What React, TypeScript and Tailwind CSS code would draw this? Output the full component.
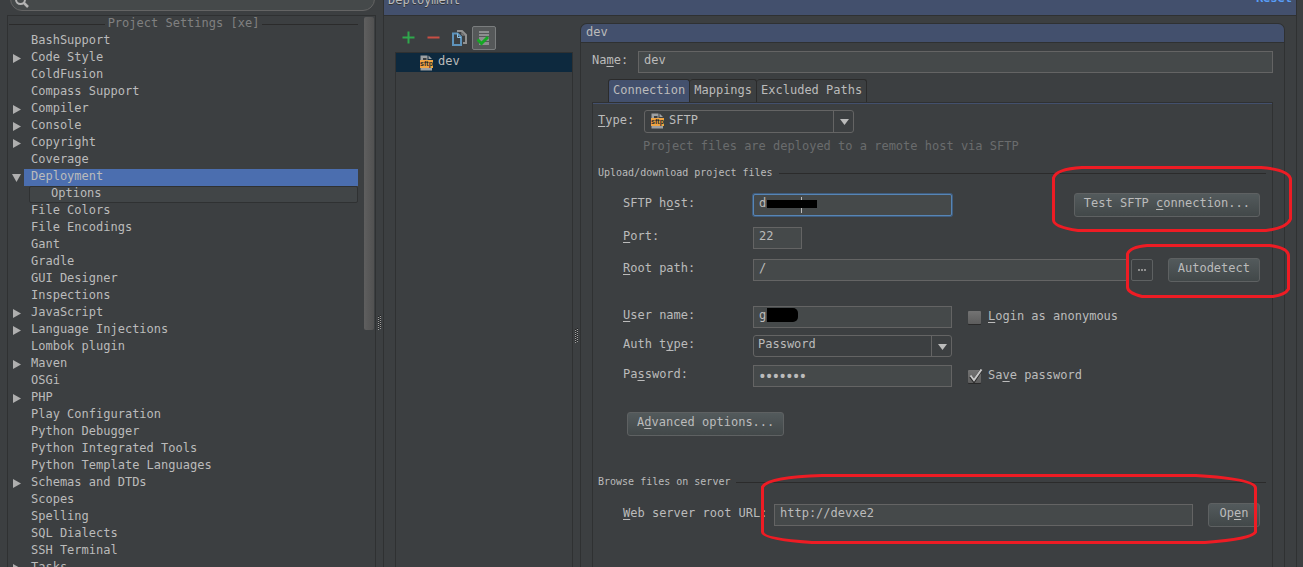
import React, { useState } from 'react';
import clsx from 'clsx';

interface TreeItem {
  label: string;
  arrow?: 'closed' | 'open';
  selected?: boolean;
  child?: boolean;
}

const treeItems: TreeItem[] = [
  { label: 'BashSupport' },
  { label: 'Code Style', arrow: 'closed' },
  { label: 'ColdFusion' },
  { label: 'Compass Support' },
  { label: 'Compiler', arrow: 'closed' },
  { label: 'Console', arrow: 'closed' },
  { label: 'Copyright', arrow: 'closed' },
  { label: 'Coverage' },
  { label: 'Deployment', arrow: 'open', selected: true },
  { label: 'Options', child: true },
  { label: 'File Colors' },
  { label: 'File Encodings' },
  { label: 'Gant' },
  { label: 'Gradle' },
  { label: 'GUI Designer' },
  { label: 'Inspections' },
  { label: 'JavaScript', arrow: 'closed' },
  { label: 'Language Injections', arrow: 'closed' },
  { label: 'Lombok plugin' },
  { label: 'Maven', arrow: 'closed' },
  { label: 'OSGi' },
  { label: 'PHP', arrow: 'closed' },
  { label: 'Play Configuration' },
  { label: 'Python Debugger' },
  { label: 'Python Integrated Tools' },
  { label: 'Python Template Languages' },
  { label: 'Schemas and DTDs', arrow: 'closed' },
  { label: 'Scopes' },
  { label: 'Spelling' },
  { label: 'SQL Dialects' },
  { label: 'SSH Terminal' },
  { label: 'Tasks', arrow: 'closed' },
];

const tabs = ['Connection', 'Mappings', 'Excluded Paths'];

const inputClass =
  'h-[22px] min-w-0 border border-[#646464] bg-[#45494a] px-[5px] pb-1 text-[#bbbbbb] outline-none';
const selectClass =
  'h-full w-full appearance-none rounded-[3px] border border-[#646464] bg-[#3c3f41] pb-1 text-[#bbbbbb] outline-none';
const buttonClass =
  'h-6 min-w-[52px] shrink-0 rounded-[3px] border border-[#5e6162] bg-linear-to-b from-[#535a5c] to-[#424849] px-[9px] pb-1 whitespace-nowrap text-[#bbbbbb]';

// "_" goes before the mnemonic letter
function Mnemonic({ text }: { text: string }) {
  const at = text.indexOf('_');
  if (at < 0) return <>{text}</>;
  return (
    <>
      {text.slice(0, at)}
      <span className="underline underline-offset-2">{text[at + 1]}</span>
      {text.slice(at + 2)}
    </>
  );
}

function TreeArrow({ open }: { open: boolean }) {
  return (
    <svg width="9" height="9" viewBox="0 0 9 9" className="shrink-0" fill="#afafaf">
      {open ? <path d="M0 1h9L4.5 9z" /> : <path d="M1 0v9l8-4.5z" />}
    </svg>
  );
}

function SftpIcon() {
  return (
    <svg width="14" height="16" viewBox="0 0 14 16" className="shrink-0">
      <path d="M0.500 0.500H7.500V5H12V15.500H0.500z" fill="#9da0a2" />
      <path d="M3 3h3.500v3H9.500v7H3z" fill="#3c3f41" />
      <path d="M8.500 0.500l3.500 3.500H8.500z" fill="#9da0a2" />
      <rect x="0" y="5" width="13" height="8" fill="#efa443" />
      <text x="6.500" y="11" fontSize="7" fontWeight="bold" textAnchor="middle" fontFamily="Liberation Sans, sans-serif" fill="#2a2a2a">sftp</text>
    </svg>
  );
}

function Splitter() {
  return (
    <div className="flex w-[7px] shrink-0 items-start justify-center">
      <svg width="4" height="15" viewBox="0 0 4 15" shapeRendering="crispEdges">
        {[0, 2, 4, 6, 8, 10, 12].map(y => (
          <g key={y}>
            <rect x="0" y={y + 2} width="1" height="1" fill="#a0a0a0" />
            <rect x="0" y={y + 1} width="1" height="1" fill="#222" />
            <rect x="2" y={y + 1} width="1" height="1" fill="#a0a0a0" />
            <rect x="2" y={y} width="1" height="1" fill="#222" />
          </g>
        ))}
      </svg>
    </div>
  );
}

function SectionTitle({ children, className }: { children: React.ReactNode; className: string }) {
  return (
    <div className={clsx('flex h-4 items-center gap-1.5 pr-[6px] text-[10px]', className)}>
      <h2>{children}</h2>
      <div className="h-px flex-1 bg-[#2b2b2b]" />
    </div>
  );
}

function SelectArrow() {
  return (
    <span className="pointer-events-none absolute inset-y-0 right-0 flex w-[21px] items-center justify-center border-l border-[#646464]">
      <svg width="9" height="7" viewBox="0 0 9 7" fill="#bbbbbb">
        <path d="M0 1h9L4.500 7z" />
      </svg>
    </span>
  );
}

function FieldLabel({ htmlFor, text }: { htmlFor: string; text: string }) {
  return (
    <label htmlFor={htmlFor} className="w-[130px] shrink-0 pb-1">
      <Mnemonic text={text} />
    </label>
  );
}

function Checkbox({ text, checked, onChange }: { text: string; checked: boolean; onChange: (v: boolean) => void }) {
  return (
    <label className="ml-4 flex items-center gap-[7px]">
      <span className="relative size-[13px]">
        <input
          type="checkbox"
          checked={checked}
          onChange={e => onChange(e.target.checked)}
          className="block size-[13px] appearance-none rounded-[1px] bg-linear-to-b from-[#737373] to-[#5d5d5d] shadow-[0_1px_0_#2a2a2a]"
        />
        {checked && (
          <svg width="15" height="14" viewBox="0 0 15 14" className="pointer-events-none absolute -top-px left-0" fill="none">
            <path d="M2.500 7.500L6 12L13 1.500" stroke="#2a2a2a" strokeWidth="3" />
            <path d="M2.500 6.500L6 11L13.500 0.500" stroke="#c8c8c8" strokeWidth="2" />
          </svg>
        )}
      </span>
      <span className="pb-0.5">
        <Mnemonic text={text} />
      </span>
    </label>
  );
}

function SettingsTree() {
  return (
    <nav className="flex min-h-0 flex-1 overflow-hidden border border-b-0 border-[#2f3132]">
      <div className="min-w-0 flex-1">
        <div className="flex h-[17px] items-center gap-[3px] pl-px text-[#808080]">
          <div className="h-px flex-1 bg-[#2b2b2b]" />
          <span className="pb-[3px]">Project Settings [xe]</span>
          <div className="h-px flex-1 bg-[#2b2b2b]" />
        </div>
        <ul>
          {treeItems.map(item => (
            <li key={item.label} className="flex h-[17px] items-center">
              <span className="flex w-4 shrink-0 pl-1">
                {item.arrow && <TreeArrow open={item.arrow === 'open'} />}
              </span>
              <a
                href="#"
                className={clsx(
                  'flex h-[17px] flex-1 items-center pb-[3px]',
                  item.child ? 'ml-[5px] rounded-[2px] border border-[#2f3132] bg-[#414547] pl-[21px]' : 'pl-[7px]',
                  item.selected && 'bg-[#4b6eaf]'
                )}
              >
                {item.label}
              </a>
            </li>
          ))}
        </ul>
      </div>
      <div className="w-[17px] shrink-0 pt-px pl-[6px]">
        <div className="h-[313px] w-2.5 rounded-[2px] bg-linear-to-r from-[#5f5f5f] to-[#515151]" />
      </div>
    </nav>
  );
}

function ServerList() {
  return (
    <div className="flex w-[178px] shrink-0 flex-col">
      <div className="flex items-center pt-[9px] pl-[7px]">
        <button aria-label="Add" className="flex size-[25px] items-center justify-start">
          <svg width="13" height="13" viewBox="0 0 13 13"><path d="M6.500 0.500v12M0.500 6.500h12" stroke="#2fa84c" strokeWidth="2" /></svg>
        </button>
        <button aria-label="Remove" className="flex size-[25px] items-center justify-start">
          <svg width="13" height="13" viewBox="0 0 13 13"><path d="M0.500 6.500h12" stroke="#c84f44" strokeWidth="2" /></svg>
        </button>
        <button aria-label="Copy" className="flex h-6 w-5 items-center justify-start">
          <svg width="16" height="16" viewBox="0 0 16 16" fill="none">
            <path d="M5 1h5l4 4v8h-3" stroke="#909090" strokeWidth="2" />
            <path d="M10 1v4h4" stroke="#909090" />
            <path d="M1 3.500h4.500l3.500 3.500v8H1z" fill="#3c3f41" stroke="#5e93bb" strokeWidth="2" />
            <path d="M5.500 3.500v4H9" stroke="#8fc0e0" />
          </svg>
        </button>
        <button aria-label="Use as default" className="flex size-6 items-center justify-center rounded-[2px] border border-[#7a7d7e] bg-[#555859]">
          <svg width="14" height="16" viewBox="0 0 14 16" fill="none">
            <rect x="2" y="1" width="10" height="14" fill="#8c8e8f" />
            <path d="M2 3.500h10M2 6.500h10" stroke="#555859" />
            <path d="M8 11.500h4" stroke="#555859" />
            <path d="M0.500 9.500L4.500 13.500L11 7" stroke="#15a824" strokeWidth="3" />
          </svg>
        </button>
      </div>
      <ul className="mt-0.5 flex-1 border border-b-0 border-[#2f3132]">
        <li className="flex h-[19px] items-center gap-1 bg-[#0d293e] pl-6">
          <SftpIcon />
          <span className="pb-[3px]">dev</span>
        </li>
      </ul>
    </div>
  );
}

function ConnectionForm() {
  const [type, setType] = useState('SFTP');
  const [host, setHost] = useState('d');
  const [port, setPort] = useState('22');
  const [rootPath, setRootPath] = useState('/');
  const [user, setUser] = useState('g');
  const [authType, setAuthType] = useState('Password');
  const [password, setPassword] = useState('secret1');
  const [anonymous, setAnonymous] = useState(false);
  const [savePassword, setSavePassword] = useState(true);
  const [url, setUrl] = useState('http://devxe2');

  return (
    <div className="flex-1 border border-b-0 border-[#2f3132]">
      <div className="h-px bg-[#43506d]" />
      <form className="pt-1.5 pl-[5px]" onSubmit={e => e.preventDefault()}>
        <div className="flex h-[23px] items-center">
          <label htmlFor="type" className="w-[46px] pb-1"><Mnemonic text="_Type:" /></label>
          <div className="relative h-full w-[210px]">
            <select id="type" value={type} onChange={e => setType(e.target.value)} className={clsx(selectClass, 'pl-6')}>
              <option>SFTP</option>
            </select>
            <span className="pointer-events-none absolute top-[3px] left-[7px]"><SftpIcon /></span>
            <SelectArrow />
          </div>
        </div>
        <p className="mt-[5px] h-4 pl-[45px] leading-4 text-[#6a6c6d]">Project files are deployed to a remote host via SFTP</p>

        <SectionTitle className="mt-[11px]">Upload/download project files</SectionTitle>
        <div className="pr-3 pl-[25px]">
          <div className="mt-3 flex h-6 items-center">
            <FieldLabel htmlFor="host" text="SFTP h_ost:" />
            <div className="relative">
              <input id="host" value={host} onChange={e => setHost(e.target.value)} className="block h-[22px] w-[199px] rounded-[2px] border border-[#5785b5] bg-[#45494a] px-[5px] pb-1 ring-1 ring-[#3f5d7f] outline-none" />
              <span className="absolute top-[3px] left-12 h-4 w-px bg-[#bbbbbb]" />
              <span className="absolute top-1.5 left-3.5 h-2 w-[50px] bg-black" />
            </div>
            <button type="button" className={clsx(buttonClass, 'ml-auto')}><Mnemonic text="Test SFTP _connection..." /></button>
          </div>
          <div className="mt-[10px] flex items-center">
            <FieldLabel htmlFor="port" text="_Port:" />
            <input id="port" value={port} onChange={e => setPort(e.target.value)} className={clsx(inputClass, 'w-[49px]')} />
          </div>
          <div className="mt-[9px] flex h-6 items-center">
            <FieldLabel htmlFor="root" text="_Root path:" />
            <input id="root" value={rootPath} onChange={e => setRootPath(e.target.value)} className={clsx(inputClass, 'flex-1')} />
            <button type="button" aria-label="Browse" className="ml-[3px] flex h-[22px] w-[22px] items-center justify-center gap-px rounded-[2px] border border-[#5e6162]">
              <span className="size-0.5 bg-[#8f8f8f]" />
              <span className="size-0.5 bg-[#8f8f8f]" />
              <span className="size-0.5 bg-[#8f8f8f]" />
            </button>
            <button type="button" className={clsx(buttonClass, 'ml-[15px]')}>Autodetect</button>
          </div>

          <div className="mt-6 flex items-center">
            <FieldLabel htmlFor="user" text="_User name:" />
            <div className="relative">
              <input id="user" value={user} onChange={e => setUser(e.target.value)} className={clsx(inputClass, 'block w-[199px]')} />
              <span className="absolute top-0.5 left-3.5 h-3.5 w-[31px] rounded-r-[5px] bg-black" />
            </div>
            <Checkbox text="_Login as anonymous" checked={anonymous} onChange={setAnonymous} />
          </div>
          <div className="mt-[7px] flex h-[22px] items-center">
            <FieldLabel htmlFor="auth" text="Auth t_ype:" />
            <div className="relative h-full w-[199px]">
              <select id="auth" value={authType} onChange={e => setAuthType(e.target.value)} className={clsx(selectClass, 'pl-1')}>
                <option>Password</option>
              </select>
              <SelectArrow />
            </div>
          </div>
          <div className="mt-2 flex items-center">
            <FieldLabel htmlFor="password" text="Pa_ssword:" />
            <input id="password" type="password" value={password} onChange={e => setPassword(e.target.value)} className="h-[22px] w-[199px] border border-[#646464] bg-[#45494a] px-[5px] font-['Roboto',sans-serif] text-[20px] outline-none" />
            <Checkbox text="Sa_ve password" checked={savePassword} onChange={setSavePassword} />
          </div>
          <button type="button" className={clsx(buttonClass, 'mt-[25px] ml-1 block')}><Mnemonic text="A_dvanced options..." /></button>
        </div>

        <SectionTitle className="mt-[38px]">Browse files on server</SectionTitle>
        <div className="mt-[13px] flex h-6 items-center pr-3 pl-[25px]">
          <label htmlFor="url" className="w-[151px] shrink-0 pb-1 whitespace-nowrap"><Mnemonic text="_Web server root URL:" /></label>
          <input id="url" value={url} onChange={e => setUrl(e.target.value)} className={clsx(inputClass, 'flex-1')} />
          <button type="button" className={clsx(buttonClass, 'ml-[15px]')}><Mnemonic text="Op_en" /></button>
        </div>
      </form>
    </div>
  );
}

function ServerPanel() {
  const [name, setName] = useState('dev');
  const [activeTab, setActiveTab] = useState('Connection');

  return (
    <section className="mt-[7px] mr-[11px] flex min-w-0 flex-1 flex-col rounded-t-[7px] border border-b-0 border-[#2f3132]">
      <h2 className="h-[19px] shrink-0 rounded-t-[6px] border-b border-[#2f3132] bg-[#43506d] pl-[5px] leading-4">dev</h2>
      <div className="flex flex-1 flex-col pr-[11px] pl-[11px]">
        <div className="mt-2 flex items-center">
          <label htmlFor="name" className="w-[46px] pb-1"><Mnemonic text="Na_me:" /></label>
          <input id="name" value={name} onChange={e => setName(e.target.value)} className={clsx(inputClass, 'flex-1')} />
        </div>
        <div className="mt-1.5 flex pl-4">
          {tabs.map(tab => (
            <button
              key={tab}
              onClick={() => setActiveTab(tab)}
              className={clsx(
                'h-[23px] rounded-t-[3px] border border-b-0 border-l-0 border-[#2b2b2b] px-1 pb-[3px] whitespace-nowrap first:border-l',
                tab === activeTab && 'bg-[#43506d]'
              )}
            >
              {tab}
            </button>
          ))}
        </div>
        <ConnectionForm />
      </div>
    </section>
  );
}

export default function App() {
  return (
    <div className="relative flex h-screen overflow-hidden bg-[#3c3f41] font-['DejaVu_Sans_Mono','Liberation_Mono',monospace] text-[12px] leading-4 text-[#bbbbbb]">
      <div className="-mt-[13px] flex min-w-0 flex-1">
        <aside className="ml-[7px] flex w-[369px] shrink-0 flex-col">
          <div className="relative mr-px mb-1 ml-[3px]">
            <input type="search" aria-label="Search settings" className="block h-6 w-full rounded-full border border-[#646464] bg-[#45494a] pl-6 outline-none" />
            <svg width="16" height="16" viewBox="0 0 16 16" className="absolute top-1.5 left-1" fill="none" stroke="#b4b4b4">
              <circle cx="6.500" cy="6.500" r="4.500" strokeWidth="2" />
              <path d="M10 10l4 4" strokeWidth="2.500" />
            </svg>
          </div>
          <SettingsTree />
        </aside>
        <div className="flex pt-[328px]">
          <Splitter />
        </div>
        <main className="mr-[6px] flex min-w-0 flex-1 flex-col border-x border-[#2f3132]">
          <header className="flex h-[29px] shrink-0 justify-between border-b border-[#2f3132] bg-[#43506d] pt-[5px] pr-1 pl-1">
            <h1 className="[text-shadow:0_1px_0_#333]">Deployment</h1>
            <a href="#" className="-mt-0.5 font-bold text-[#589df6]">Reset</a>
          </header>
          <div className="flex min-h-0 flex-1 pl-[11px]">
            <ServerList />
            <div className="flex pt-[312px]">
              <Splitter />
            </div>
            <ServerPanel />
          </div>
        </main>
      </div>

      {/* hand-drawn markers */}
      <svg width="560" height="567" viewBox="743 0 560 567" className="pointer-events-none absolute top-0 right-0" fill="none" stroke="#ee1c24" strokeWidth="3">
        <path d="M1082 167.500H1261Q1290.500 170 1290.500 180V219Q1287 228 1266 230.500H1078Q1053.500 227 1053.500 220V178Q1056 169 1082 167.500Z" />
        <path d="M1147 245.500H1270Q1288.500 248 1288.500 256V289Q1285 295 1273 296.500H1142Q1127.500 293 1127.500 287V254Q1130 247 1147 245.500Z" />
        <path d="M822 475.500H1196Q1255.500 479 1255.500 488V532Q1252 539 1205 542.500H812Q762.500 539 762.500 532V487Q768 477 822 475.500Z" />
      </svg>
    </div>
  );
}
